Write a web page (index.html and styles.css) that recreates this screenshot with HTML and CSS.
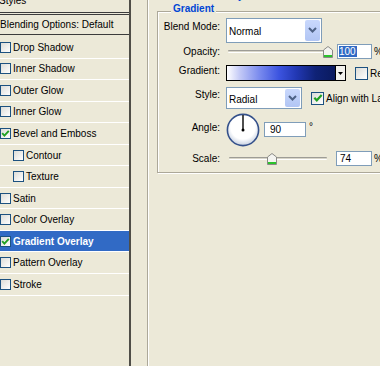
FILE: index.html
```html
<!DOCTYPE html>
<html lang="en">
<head>
  <meta charset="UTF-8">
  <title>Layer Style - Gradient Overlay</title>
  <link rel="stylesheet" href="styles.css">
</head>
<body>
  <div class="dialog">
    <div class="styles-list">
      <div class="styles-head"><span>Styles</span></div>
      <div class="blend-head">Blending Options: Default</div>
      <ul class="effects">
        <li><span class="check"></span>Drop Shadow</li>
        <li><span class="check"></span>Inner Shadow</li>
        <li><span class="check"></span>Outer Glow</li>
        <li><span class="check"></span>Inner Glow</li>
        <li><span class="check"><svg width="9" height="9" viewBox="0 0 9 9"><path d="M1.2 4.2 L3.4 6.6 L7.8 1.8" stroke="#21a121" stroke-width="1.9" fill="none"/></svg></span>Bevel and Emboss</li>
        <li class="sub"><span class="check"></span>Contour</li>
        <li class="sub"><span class="check"></span>Texture</li>
        <li><span class="check"></span>Satin</li>
        <li><span class="check"></span>Color Overlay</li>
        <li class="selected"><span class="check"><svg width="9" height="9" viewBox="0 0 9 9"><path d="M1.2 4.2 L3.4 6.6 L7.8 1.8" stroke="#21a121" stroke-width="1.9" fill="none"/></svg></span>Gradient Overlay</li>
        <li><span class="check"></span>Pattern Overlay</li>
        <li><span class="check"></span>Stroke</li>
      </ul>
    </div>

    <div class="outer">
      <div class="outer-title">Gradient Overlay</div>
      <div class="group">
        <div class="group-title">Gradient</div>

        <div class="row r-blend">
          <label>Blend Mode:</label>
          <div class="select blend-select">
            <span class="value">Normal</span>
            <span class="drop"><svg width="9" height="6" viewBox="0 0 9 6"><path d="M1 1 L4.5 4.5 L8 1" stroke="#4d6185" stroke-width="2" fill="none"/></svg></span>
          </div>
        </div>

        <div class="row r-opacity">
          <label>Opacity:</label>
          <div class="slider">
            <div class="track"></div>
            <svg class="thumb" style="left: 97px" width="10" height="12" viewBox="0 0 10 12"><path d="M0.5 4 L5 0.5 L9.5 4 L9.5 11.5 L0.5 11.5 Z" fill="#f4f4f0" stroke="#8a8a86"/><rect x="1" y="9" width="8" height="2" fill="#2cc22c"/></svg>
          </div>
          <div class="field opacity-field"><span class="sel">100</span></div>
          <span class="unit">%</span>
        </div>

        <div class="row r-gradient">
          <label>Gradient:</label>
          <div class="gradient-box">
            <div class="preview"></div>
            <div class="gdrop"><svg width="5" height="3" viewBox="0 0 5 3"><path d="M0 0 L5 0 L2.5 3 Z" fill="#000"/></svg></div>
          </div>
          <span class="check big"></span>
          <span class="opt">Reverse</span>
        </div>

        <div class="row r-style">
          <label>Style:</label>
          <div class="select style-select">
            <span class="value">Radial</span>
            <span class="drop"><svg width="9" height="6" viewBox="0 0 9 6"><path d="M1 1 L4.5 4.5 L8 1" stroke="#4d6185" stroke-width="2" fill="none"/></svg></span>
          </div>
          <span class="check big"><svg width="10" height="10" viewBox="0 0 9 9"><path d="M1.2 4.2 L3.4 6.6 L7.8 1.8" stroke="#21a121" stroke-width="1.9" fill="none"/></svg></span>
          <span class="opt">Align with Layer</span>
        </div>

        <div class="row r-angle">
          <label>Angle:</label>
          <svg class="dial" width="34" height="34" viewBox="0 0 34 34">
            <defs>
              <radialGradient id="dialFill" cx="50%" cy="40%" r="60%">
                <stop offset="65%" stop-color="#ffffff"/>
                <stop offset="100%" stop-color="#c5cfe0"/>
              </radialGradient>
            </defs>
            <circle cx="17" cy="17" r="15.6" fill="url(#dialFill)" stroke="#34508a" stroke-width="1.6"/>
            <line x1="17" y1="17" x2="17" y2="2" stroke="#222" stroke-width="1.6"/>
            <circle cx="17" cy="17" r="1.5" fill="#000"/>
          </svg>
          <div class="field angle-field">90</div>
          <span class="deg">°</span>
        </div>

        <div class="row r-scale">
          <label>Scale:</label>
          <div class="slider scale-slider">
            <div class="track"></div>
            <svg class="thumb" style="left: 41px" width="10" height="12" viewBox="0 0 10 12"><path d="M0.5 4 L5 0.5 L9.5 4 L9.5 11.5 L0.5 11.5 Z" fill="#f4f4f0" stroke="#8a8a86"/><rect x="1" y="9" width="8" height="2" fill="#2cc22c"/></svg>
          </div>
          <div class="field scale-field">74</div>
          <span class="unit">%</span>
        </div>
      </div>
    </div>
  </div>
</body>
</html>
```

FILE: styles.css
```css
* {
  margin: 0;
  padding: 0;
  box-sizing: border-box;
}

body {
  background: #ece9d8;
  font-family: 'Liberation Sans', Arial, sans-serif;
  font-size: 10px;
  color: #000;
  height: 366px;
  overflow: hidden;
}

.dialog {
  display: flex;
  height: 366px;
}

/* left styles list */
.styles-list {
  width: 131px;
  flex-shrink: 0;
  border-right: 2px solid #4f4e48;
}

.styles-head {
  height: 15px;
  border-bottom: 3px double #3c3c3c;
  overflow: hidden;
}

.styles-head span {
  display: block;
  line-height: 12px;
  margin: -5px 0 0 -1px;
}

.blend-head {
  height: 20px;
  line-height: 19px;
  border-bottom: 1px solid #3c3c3c;
  white-space: nowrap;
}

.effects {
  list-style: none;
  padding-top: 2px;
}

.effects li {
  height: 21.55px;
  border-bottom: 1px solid #fff;
  display: flex;
  align-items: center;
  gap: 2px;
  white-space: nowrap;
}

.effects li.sub {
  padding-left: 13px;
}

.effects li.selected {
  background: #316ac5;
  color: #fff;
  font-weight: bold;
}

.check {
  width: 11px;
  height: 11px;
  flex-shrink: 0;
  border: 1px solid #1c5180;
  background: linear-gradient(135deg, #dcdcd7, #fff);
  display: flex;
  align-items: center;
  justify-content: center;
}

.check.big {
  width: 13px;
  height: 13px;
  margin-right: 2px;
}

/* right options */
.outer {
  flex: 1;
  min-width: 0;
  margin: -6px 0 0 16px;
  border-left: 1px solid #aca899;
  border-top: 1px solid #aca899;
  box-shadow: inset 1px 1px 0 #fff;
  padding-left: 9px;
}

.outer-title {
  margin: -5px 0 0 6px;
  height: 12px;
  line-height: 12px;
  color: #0046d5;
  font-weight: bold;
  white-space: nowrap;
}

.group {
  width: 260px;
  margin-top: 9px;
  padding-bottom: 4px;
  border: 1px solid #aca899;
  box-shadow: inset 1px 1px 0 #fff, 1px 1px 0 #fff;
}

.group-title {
  width: max-content;
  margin: -9px 0 0 13px;
  padding: 0 2px;
  height: 12px;
  line-height: 12px;
  background: #ece9d8;
  color: #0046d5;
  font-weight: bold;
}

.row {
  display: flex;
  align-items: center;
  white-space: nowrap;
}

.row label {
  width: 62px;
  flex-shrink: 0;
  margin-right: 6px;
  text-align: right;
  line-height: 12px;
}

.r-blend { height: 26px; margin-top: 2px; }
.r-blend label { padding-bottom: 6px; }
.r-opacity { height: 17px; }
.r-gradient { height: 26px; }
.r-gradient label { padding-bottom: 4px; }
.r-style { height: 24px; }
.r-style label { padding-bottom: 6px; }
.r-angle { height: 39px; }
.r-angle label { padding-bottom: 3px; }
.r-scale { height: 19px; }

.select {
  display: flex;
  flex-shrink: 0;
  border: 1px solid #7f9db9;
  background: #fff;
}

.blend-select {
  width: 96px;
  height: 25px;
}

.style-select {
  width: 76px;
  height: 22px;
  margin-right: 9px;
}

.select .value {
  flex: 1;
  display: flex;
  align-items: center;
  padding: 2px 0 0 2px;
}

.select .drop {
  width: 15px;
  margin: 1px;
  border-radius: 2px;
  background: linear-gradient(#c9d8fc, #b1c5f4);
  display: flex;
  align-items: center;
  justify-content: center;
}

.slider {
  position: relative;
  width: 106px;
  height: 12px;
  flex-shrink: 0;
  display: flex;
  align-items: center;
  padding-left: 2px;
  margin-right: 5px;
}

.scale-slider {
  padding-left: 3px;
  margin-right: 4px;
}

.track {
  width: 98px;
  height: 3px;
  border-top: 1px solid #9d9c96;
  border-bottom: 1px solid #fff;
  background: #d8d5c8;
  border-radius: 1px;
}

.thumb {
  position: absolute;
  top: 0;
}

.field {
  height: 15px;
  flex-shrink: 0;
  border: 1px solid #7f9db9;
  background: #fff;
  display: flex;
  align-items: center;
}

.opacity-field {
  width: 35px;
  padding-left: 1px;
}

.sel {
  background: #316ac5;
  color: #fff;
  padding: 0 1px 0 0;
}

.scale-field {
  width: 36px;
  padding-left: 3px;
}

.angle-field {
  width: 42px;
  padding-left: 5px;
  margin-right: 3px;
}

.unit {
  margin-left: 2px;
}

.deg {
  align-self: flex-start;
  margin-top: 11px;
}

.dial {
  flex-shrink: 0;
  margin-right: 4px;
}

.gradient-box {
  width: 120px;
  height: 16px;
  flex-shrink: 0;
  margin-right: 9px;
  border: 1px solid #000;
  display: flex;
}

.preview {
  flex: 1;
  background: linear-gradient(to right, #ffffff 0%, #c3c9f6 12%, #7a8bee 30%, #3c54e0 48%, #2238b4 64%, #0f2276 82%, #0a1a5e 100%);
}

.gdrop {
  width: 10px;
  border-left: 1px solid #000;
  background: #f2f1ec;
  display: flex;
  align-items: center;
  justify-content: center;
}
```
